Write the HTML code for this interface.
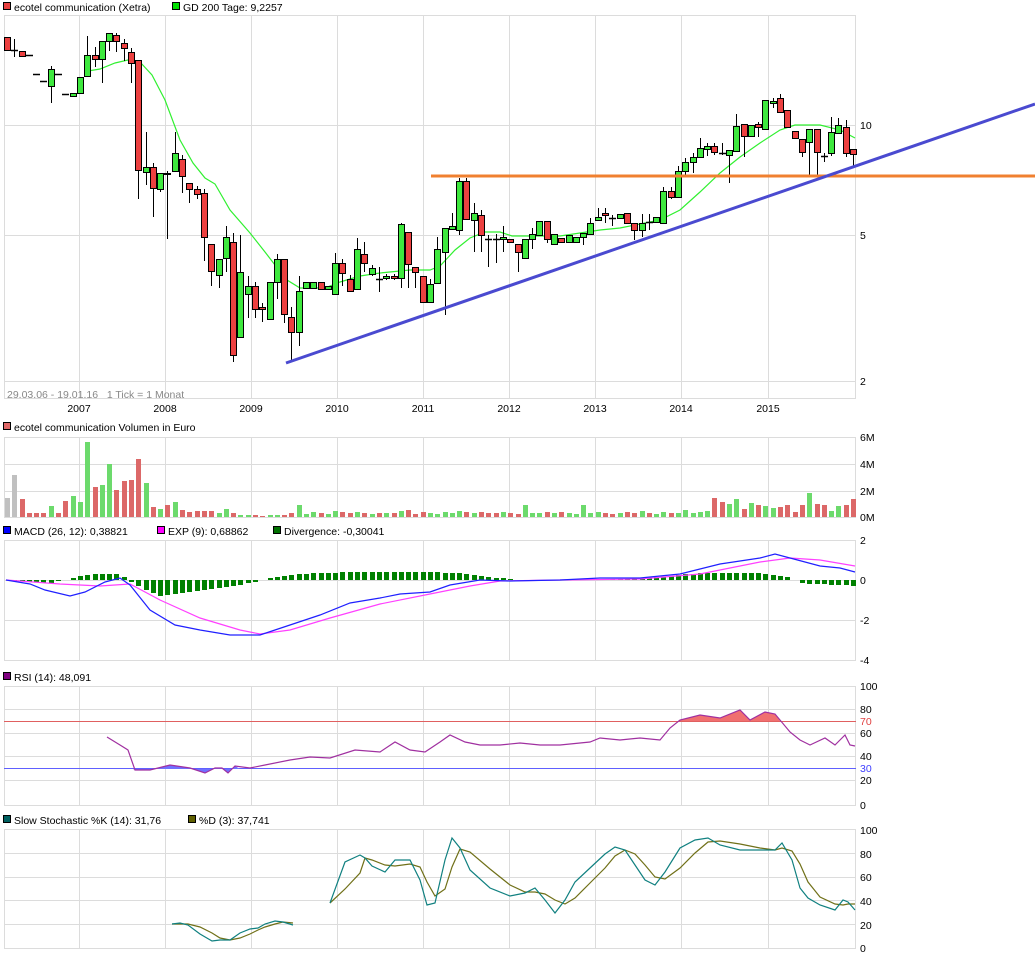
<!DOCTYPE html>
<html><head><meta charset="utf-8">
<style>
html,body{margin:0;padding:0;background:#fff;}
svg{display:block;font-family:"Liberation Sans",sans-serif;font-size:10.5px;}
</style></head>
<body>
<svg id="s" width="1035" height="958" xmlns="http://www.w3.org/2000/svg"></svg>
<script>
var S=document.getElementById('s'),o='';
function L(x1,y1,x2,y2,c,w){o+='<line x1="'+x1+'" y1="'+y1+'" x2="'+x2+'" y2="'+y2+'" stroke="'+c+'" stroke-width="'+(w||1)+'"/>';}
function R(x,y,w,h,f,s){o+='<rect x="'+x+'" y="'+y+'" width="'+w+'" height="'+h+'" fill="'+f+'"'+(s?' stroke="'+s+'" stroke-width="1"':'')+'/>';}
function T(x,y,t,c,a){o+='<text x="'+x+'" y="'+y+'" fill="'+(c||'#000')+'"'+(a?' text-anchor="'+a+'"':'')+'>'+t+'</text>';}
function P(pts,c,w,f){o+='<polyline points="'+pts.map(function(p){return p.join(',')}).join(' ')+'" fill="'+(f||'none')+'" stroke="'+c+'" stroke-width="'+(w||1)+'"/>';}
var G='#dcdcdc',years=[79,165,251,337,423,509,595,681,768],yl=['2007','2008','2009','2010','2011','2012','2013','2014','2015'];
function box(y1,y2,hs){
  L(4.5,y1,4.5,y2,G);L(855.5,y1,855.5,y2,G);L(4,y1+.5,856,y1+.5,G);L(4,y2+.5,856,y2+.5,G);
  years.forEach(function(x){L(x+.5,y1,x+.5,y2,G);});
  (hs||[]).forEach(function(y){L(4,y+.5,856,y+.5,G);});
}
function leg(x,y,c,t){R(x+.5,y-8.5,7,7,c,'#000');T(x+11,y,t);}
leg(3,11,'#e84040','ecotel communication (Xetra)');leg(172,11,'#00e000','GD 200 Tage: 9,2257');
box(15,398,[125,235,381]);
T(860,129,'10');T(860,239,'5');T(860,385,'2');
yl.forEach(function(t,i){T(years[i],412,t,'#000','middle');});
T(7,398,'29.03.06 - 19.01.16&#160;&#160;&#160;1 Tick = 1 Monat','#888');
var C=[['r',37,50,37,50],['d',50,50,39,57],['r',51,56,51,56],['d',55,55,55,55],['d',74,74,74,74],['d',81,81,81,81],['g',69,86,66,103],['d',74,74,74,74],['d',94,94,94,94],['g',93,96,93,96],
['g',77,93,77,93],['g',55,76,36,77],['r',55,59,47,67],['g',41,59,41,83],['g',33,41,33,51],['r',35,41,33,52],['r',43,48,39,61],['r',52,63,48,83],['r',60,170,60,199],['g',167,172,132,185],
['r',167,188,163,217],['g',173,189,173,192],['r',173,174,171,239],['g',153,171,132,171],['r',159,176,155,193],['r',183,189,183,203],['r',189,194,186,199],['r',193,237,189,261],['r',244,271,244,286],['g',259,275,259,288],
['g',237,258,226,272],['r',242,355,233,362],['g',272,337,235,337],['g',286,294,276,318],['r',286,309,282,318],['r',307,309,303,322],['g',282,319,282,319],['g',259,282,254,299],['r',259,314,259,323],['r',317,332,307,362],
['g',291,332,276,346],['g',282,288,282,288],['g',282,288,282,288],['r',282,289,282,289],['g',286,289,286,289],['g',263,294,253,294],['r',263,273,259,286],['r',279,291,275,291],['g',249,289,238,289],['r',254,263,242,272],
['g',268,274,265,276],['d',279,279,267,292],['g',276,278,274,280],['r',276,278,274,280],['g',224,278,223,288],['r',232,264,232,288],['r',267,272,267,288],['r',276,302,276,302],['g',284,302,279,302],
['g',249,283,237,283],['g',228,252,228,315],['g',226,229,213,229],['g',181,230,178,235],['r',181,219,178,219],['g',213,220,203,252],['r',215,235,210,252],['d',239,239,235,267],['d',239,239,234,263],['g',237,239,226,252],
['r',239,242,239,242],['r',244,252,244,272],['g',239,258,239,258],['g',234,239,228,249],['g',221,235,221,235],['r',221,239,221,243],['g',234,244,234,244],['r',238,242,238,242],['g',235,242,235,242],['g',237,242,237,242],
['g',233,237,233,245],['g',223,234,218,234],['g',217,220,208,220],['r',213,215,208,223],['d',218,218,215,226],['g',214,218,214,218],['r',213,223,213,223],['r',223,230,223,240],['g',223,230,214,237],['d',222,222,214,230],
['g',217,222,217,222],['g',191,223,187,223],['r',191,197,187,199],['g',171,197,166,197],['g',162,171,158,175],['g',157,162,153,173],['g',148,157,138,157],['g',146,149,143,156],['r',146,152,143,155],['d',153,153,143,155],
['g',150,155,150,183],['g',126,151,114,151],['r',124,136,124,157],['g',125,136,125,136],['r',124,127,122,137],['g',100,129,100,129],['g',101,103,98,108],['r',98,112,94,113],['r',110,127,110,127],['r',131,138,131,138],
['r',139,152,139,157],['g',129,142,129,175],['r',129,152,129,175],['d',156,156,153,162],['g',132,153,117,156],['g',125,133,118,133],['r',127,153,120,157],['r',149,154,149,167]];
var N=C.length;function X(i){return 7+i*(846/(N-1));}
P([[88,71],[100,69],[115,63],[128,60],[140,62],[152,75],[165,100],[180,140],[193,163],[205,178],[215,184],[230,210],[250,233],[265,252],[275,265],[287,280],[300,288],[325,288],[340,282],[360,276],[380,273],[410,270],[430,270],[440,266],[455,250],[470,238],[485,232],[500,232],[512,236],[530,236],[560,236],[580,233],[600,230],[620,228],[640,224],[660,220],[680,210],[700,192],[720,173],[740,157],[760,143],[780,130],[795,125],[820,125],[840,130],[855,138]],'#30f030',1.2);
C.forEach(function(c,i){var x=Math.round(X(i));L(x+.5,c[3],x+.5,c[4],'#000');
 if(c[0]=='d'){L(x-3,c[1]+.5,x+4,c[1]+.5,'#000',1.5);}else{R(x-2.5,c[1]+.5,6,Math.max(1,c[2]-c[1]),c[0]=='g'?'#3ee83e':'#ec4040','#000');}});
L(431,176,1035,176,'#f08030',3);
L(286,363,1035,104,'#4a4ad0',3);
leg(3,431,'#e06868','ecotel communication Volumen in Euro');
box(437,517,[464,491]);
T(860,441,'6M');T(860,468,'4M');T(860,495,'2M');T(860,521,'0M');
var V=[19,42,18,4,4,4,11,4,16,21,15,75,30,32,53,27,36,37,58,34,10,8,12,15,7,5,6,6,6,4,8,4,2,2,2,1,2,2,2,4,12,3,5,4,3,6,5,4,5,4,3,4,4,4,6,7,3,5,4,3,5,4,6,5,4,5,4,4,5,4,3,12,4,4,5,4,5,4,3,12,4,5,4,3,4,5,4,6,4,3,5,4,4,7,4,5,6,19,15,13,18,8,14,12,11,9,10,12,5,12,24,13,12,6,11,12,18,9,16,5];
C.forEach(function(c,i){var h=V[i]||4;var col=i<2?'#c0c0c0':(c[0]=='g'?'#6cda6c':'#dc6868');R(Math.round(X(i))-2,517-h,5,h,col);});
leg(3,535,'#0000ff','MACD (26, 12): 0,38821');leg(157,535,'#ff00ff','EXP (9): 0,68862');leg(273,535,'#007000','Divergence: -0,30041');
box(540,660,[580,620]);
T(860,544,'2');T(860,584,'0');T(860,624,'-2');T(860,664,'-4');
var HK=[[6,0],[50,-3],[90,6],[120,6],[135,-5],[160,-16],[190,-12],[220,-8],[250,-3],[270,2],[300,6],[350,8],[420,8],[460,7],[490,3],[520,0],[600,0],[660,3],[700,7],[760,7],[790,3],[800,-3],[855,-6]];
function interp(a,x){for(var k=1;k<a.length;k++){if(x<=a[k][0]){var t=(x-a[k-1][0])/(a[k][0]-a[k-1][0]);return a[k-1][1]+t*(a[k][1]-a[k-1][1]);}}return a[a.length-1][1];}
C.forEach(function(c,i){var x=X(i),h=Math.round(interp(HK,x));if(h>0)R(Math.round(x)-2,580-h,5,h,'#008000');else if(h<0)R(Math.round(x)-2,580,5,-h,'#008000');});
P([[6,580],[60,584],[100,586],[130,584],[160,600],[200,618],[240,630],[260,634],[290,630],[330,618],[380,604],[430,594],[470,586],[500,581],[560,580],[640,579],[700,574],[760,562],[790,558],[820,560],[855,566]],'#ff40ff',1.2);
P([[6,580],[30,584],[45,590],[70,596],[85,592],[105,582],[120,578],[130,585],[150,610],[175,625],[200,630],[230,635],[260,635],[290,625],[320,615],[350,603],[380,598],[400,594],[430,592],[450,585],[480,580],[510,581],[560,580],[600,578],[640,578],[680,574],[720,564],[760,558],[775,554],[790,558],[820,566],[840,568],[855,572]],'#2020ff',1.2);
leg(3,681,'#800080','RSI (14): 48,091');
box(686,805,[709,733,756,780]);
L(4,721.5,856,721.5,'#e06060');L(4,768.5,856,768.5,'#6060ff');
var RS=[[107,737],[120,745],[128,750],[135,770],[150,770],[170,765],[190,768],[205,773],[215,768],[222,768],[228,773],[235,766],[250,768],[265,765],[290,760],[310,757],[330,758],[355,750],[380,752],[395,742],[410,750],[425,752],[440,742],[450,735],[465,742],[480,745],[500,745],[520,743],[540,745],[560,745],[590,742],[600,738],[620,740],[640,738],[660,740],[670,728],[680,720],[700,715],[720,718],[740,710],[750,720],[765,712],[775,714],[790,732],[800,740],[810,745],[825,738],[835,745],[845,735],[850,745],[855,746]];
o+='<polygon points="133,769 135,770 150,770 170,765 190,768 205,773 215,768 222,768 228,773 235,766 240,769" fill="#7070ff"/>';
o+='<polygon points="678,721 680,720 700,715 720,718 740,710 750,720 765,712 775,714 780,721" fill="#f07070"/>';
P(RS,'#a030a0',1.2);
[[100,690],[80,713],[70,725,'#e04040'],[60,737],[40,760],[30,772,'#4040ff'],[20,784],[0,809]].forEach(function(a){T(860,a[1],a[0],a[2]||'#000');});
leg(3,824,'#006060','Slow Stochastic %K (14): 31,76');leg(188,824,'#606000','%D (3): 37,741');
box(829,948,[853,877,900,924]);
[[100,834],[80,858],[60,881],[40,905],[20,929],[0,952]].forEach(function(a){T(860,a[1],a[0]);});
var K1=[[172,924],[180,923],[188,925],[200,934],[212,941],[220,940],[230,940],[240,933],[250,929],[258,928],[265,924],[275,921],[283,922],[293,925]];
var K2=[[330,903],[345,862],[360,855],[365,858],[372,866],[385,872],[395,860],[410,860],[420,880],[427,905],[435,903],[445,860],[452,838],[460,848],[470,870],[490,888],[510,896],[525,893],[535,888],[545,900],[555,913],[565,900],[575,882],[590,868],[605,854],[615,847],[625,850],[635,865],[645,880],[655,885],[665,872],[680,848],[695,840],[708,838],[720,845],[740,850],[760,850],[775,850],[782,843],[792,860],[800,888],[808,898],[820,905],[835,910],[843,900],[848,902],[855,910]];
function shift(a){return a.map(function(p,i){var j=Math.max(0,i-1);return [p[0],Math.round((p[1]+a[j][1]+(a[Math.max(0,i-2)][1]))/3)];});}
P(shift(K1),'#707018',1.2);P(shift(K2),'#707018',1.2);
P(K1,'#108080',1.2);P(K2,'#108080',1.2);
S.innerHTML=o;
</script>
</body></html>
